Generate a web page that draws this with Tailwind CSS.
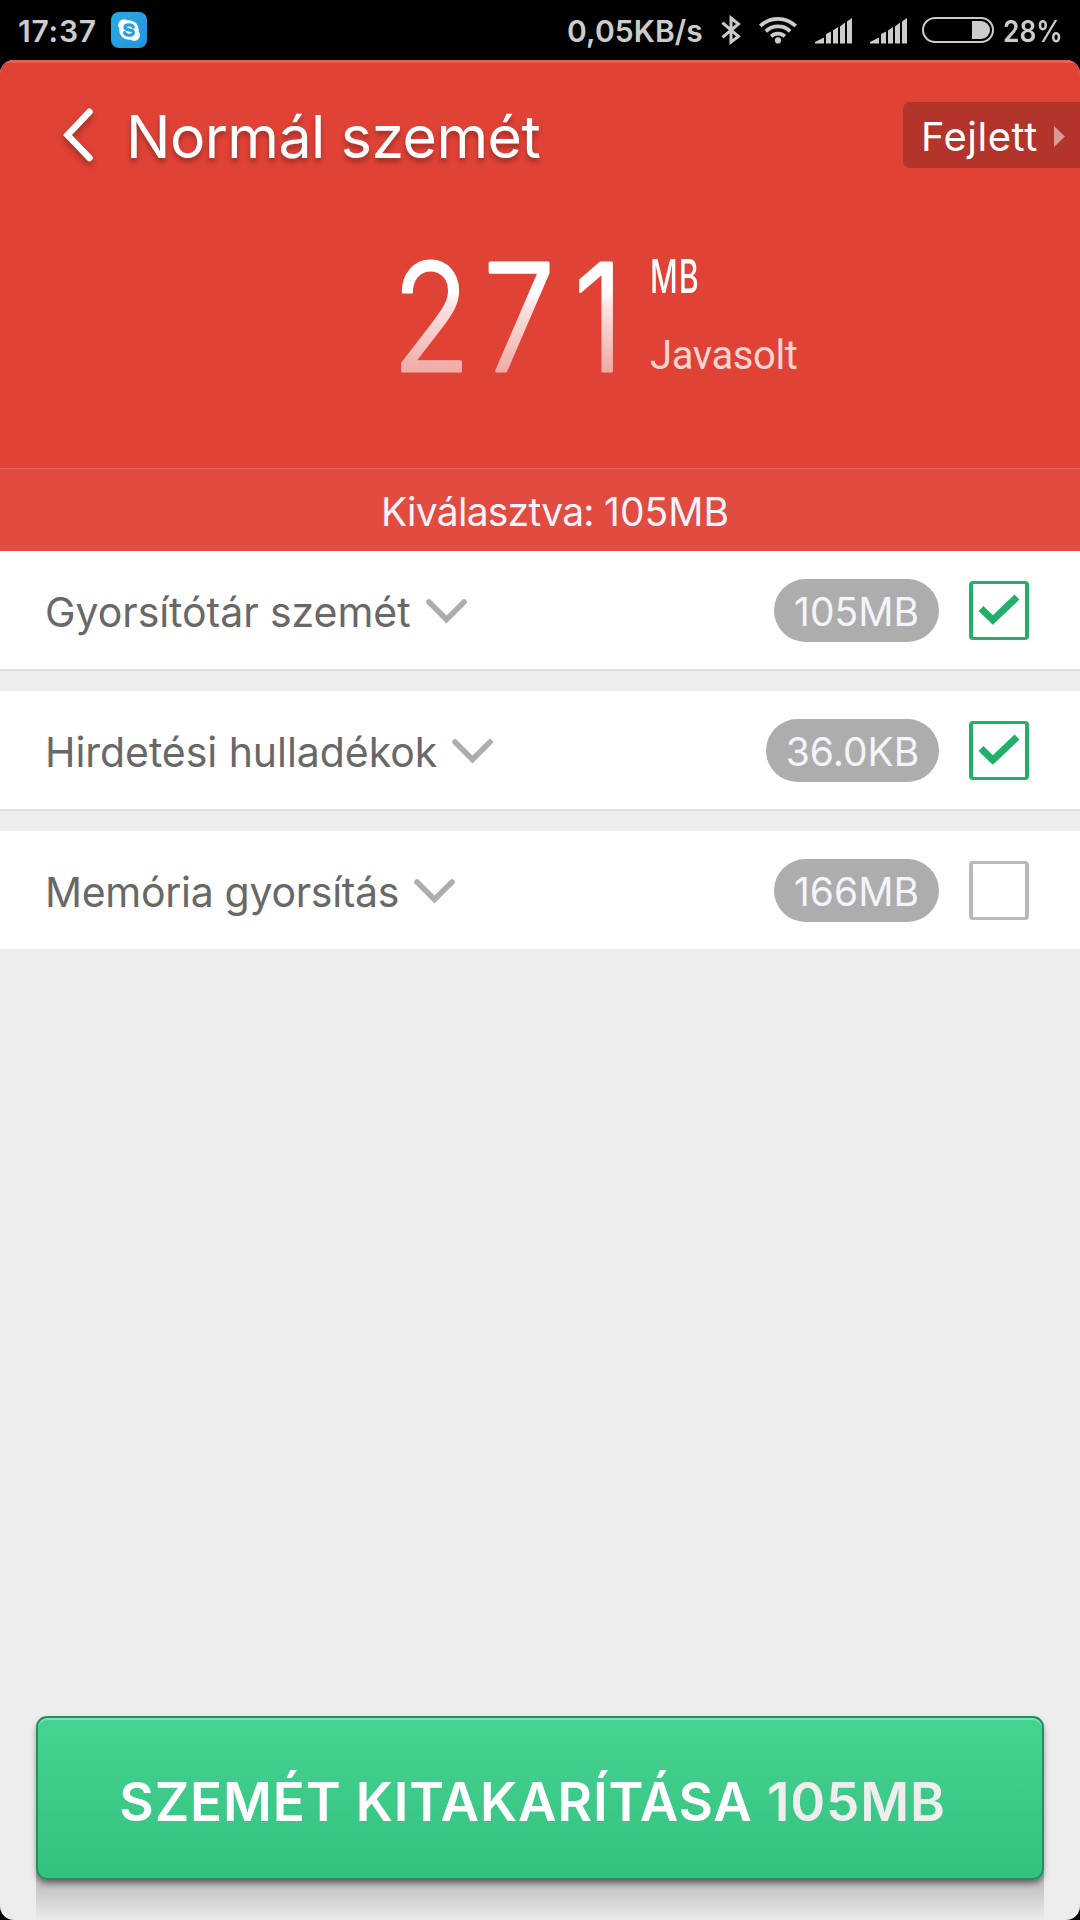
<!DOCTYPE html>
<html lang="hu">
<head>
    <meta charset="UTF-8">
    <meta name="viewport" content="width=device-width, initial-scale=1.0">
    <title>Normál szemét</title>
    <script src="https://cdn.jsdelivr.net/npm/@tailwindcss/browser@4"></script>
</head>
<body class="bg-black w-[1080px] h-[1920px] overflow-hidden font-['Inter','Liberation_Sans',sans-serif]">
    <div class="flex flex-col w-full h-full">

        <!-- status bar -->
        <div class="h-[60px] shrink-0 flex items-center justify-between pl-[18px] pr-[18px] text-[#cccccc] font-semibold text-[30px] leading-[60px]">
            <div class="flex items-center">
                <span class="tracking-[0.8px] pt-[2px] w-[93px]">17:37</span>
                <svg width="36" height="36" viewBox="0 0 36 36">
                    <defs>
                        <linearGradient id="sky" x1="0" y1="0" x2="1" y2="1">
                            <stop offset="0" stop-color="#2aaae2"/>
                            <stop offset="1" stop-color="#2393de"/>
                        </linearGradient>
                    </defs>
                    <rect width="36" height="36" rx="8" fill="url(#sky)"/>
                    <circle cx="18" cy="18" r="9.8" fill="#fff"/>
                    <circle cx="13" cy="13" r="5.8" fill="#fff"/>
                    <circle cx="23.2" cy="23.2" r="5.8" fill="#f1f6fb"/>
                    <path d="M22.2 15.2C21.4 12.2 14 12 14 15.4C14 19 22.4 16.8 22.4 20.6C22.4 24.2 14.4 24 13.6 20.6" fill="none" stroke="#2a9fdf" stroke-width="3.2" stroke-linecap="round"/>
                </svg>
            </div>
            <div class="flex items-center">
                <span class="tracking-[0.1px] pt-[2px] w-[154px]">0,05KB/s</span>
                <svg width="20" height="30" viewBox="0 0 20 30" fill="none" stroke="#cccccc" stroke-width="3" stroke-linejoin="miter">
                    <path d="M1.4 7.6L17.5 21.5L10 27V3L17.5 9L1.4 22.4"/>
                </svg>
                <svg class="ml-[18px]" width="38" height="28" viewBox="0 0 38 28" fill="none" stroke="#cccccc" stroke-width="3.8">
                    <path d="M1.3 10A25.5 25.5 0 0 1 36.7 10"/>
                    <path d="M6.8 15.3A17.6 17.6 0 0 1 31.2 15.3"/>
                    <path d="M12.2 20.3A10 10 0 0 1 25.8 20.3"/>
                    <circle cx="19" cy="24.4" r="3.1" fill="#cccccc" stroke="none"/>
                </svg>
                <svg class="ml-[18px] mt-[2px]" width="37" height="26" viewBox="0 0 37 26" fill="#cccccc">
                    <path d="M0 25.5V24L9 19.5V25.5ZM11 25.5V16L16 13.5V25.5ZM18 25.5V12.5L23 9V25.5ZM25 25.5V8.5L30 4.5V25.5ZM32 25.5V3.5L37 0V25.5Z"/>
                </svg>
                <svg class="ml-[18px] mt-[2px]" width="37" height="26" viewBox="0 0 37 26" fill="#cccccc">
                    <path d="M0 25.5V24L9 19.5V25.5ZM11 25.5V16L16 13.5V25.5ZM18 25.5V12.5L23 9V25.5ZM25 25.5V8.5L30 4.5V25.5ZM32 25.5V3.5L37 0V25.5Z"/>
                </svg>
                <div class="ml-[15px] w-[72px] h-[26px] rounded-full border-2 border-[#cccccc] p-[2px] flex justify-end">
                    <div class="w-[18px] h-full bg-[#cccccc] rounded-r-full"></div>
                </div>
                <span class="ml-[9px] pt-[2px] w-[59px]"><span class="inline-block origin-left scale-x-[0.88]">28%</span></span>
            </div>
        </div>

        <div class="flex-1 flex flex-col bg-[#ededed] rounded-[14px] overflow-hidden">

            <!-- header -->
            <div class="h-[491px] shrink-0 flex flex-col bg-[#e04236] text-white border-t-[3px] border-[#e66257]">
                <div class="h-[144px] flex items-center justify-between pl-[62px]">
                    <div class="flex items-center">
                        <svg class="drop-shadow-[0_4px_3px_rgba(0,0,0,0.3)]" width="32" height="54" viewBox="0 0 32 54" fill="none" stroke="#fff" stroke-width="6.5" stroke-linecap="round" stroke-linejoin="miter">
                            <path d="M27.5 3.8L5.5 27L27.5 50"/>
                        </svg>
                        <h1 class="ml-[32px] pt-[3px] text-[59px] leading-none tracking-[-0.55px] [text-shadow:0_4px_5px_rgba(0,0,0,0.3)]">Normál szemét</h1>
                    </div>
                    <button class="h-[66px] w-[177px] flex items-center bg-[#b2342b] rounded-l-[7px] pl-[18px] pt-[3px] text-[40px] leading-none tracking-[0.5px]">
                        Fejlett
                        <svg class="ml-[16px]" width="11" height="21" viewBox="0 0 11 21" fill="#dc9893">
                            <path d="M0 0L11 10.5L0 21Z"/>
                        </svg>
                    </button>
                </div>

                <div class="h-[261px] pt-[15px] pl-[392px] flex">
                    <svg width="240" height="190" viewBox="0 0 240 190">
                        <defs>
                            <linearGradient id="fade" gradientUnits="userSpaceOnUse" x1="0" y1="39" x2="0" y2="150">
                                <stop offset="0.28" stop-color="#fff"/>
                                <stop offset="0.42" stop-color="#fae2e0"/>
                                <stop offset="1" stop-color="#f1a9a5"/>
                            </linearGradient>
                        </defs>
                        <text transform="scale(0.86 1)" x="0 106 211" y="149" font-size="149" font-weight="300" fill="url(#fade)" stroke="url(#fade)" stroke-width="3" stroke-linejoin="round">271</text>
                    </svg>
                    <div class="ml-[18px] flex flex-col items-start">
                        <span class="mt-[31px] h-[47px] origin-left scale-x-[0.66] text-[46px] leading-[47px] font-medium tracking-[1.5px]">MB</span>
                        <span class="mt-[33px] text-[40px] leading-[46px] tracking-[-0.4px] font-['Roboto',sans-serif] text-[#fad4d1]">Javasolt</span>
                    </div>
                </div>

                <div class="flex-1 flex items-center justify-center bg-[#e24b40] border-t border-[#e5695f] pl-[30px] pt-[2px] text-[39px] leading-none text-[#f7f3fa] whitespace-pre"><span class="tracking-[-0.75px]">Kiválasztva: </span>105MB</div>
            </div>

            <!-- junk categories -->
            <div class="flex flex-col gap-5 text-[#686868] text-[41px] leading-none">
                <div class="h-[120px] flex items-center justify-between bg-white border-b-2 border-[#dcdcdc] pl-[45px] pr-[51px]">
                    <div class="flex items-center pt-[2px]">
                        <span class="pt-[3px] tracking-[-0.05px]">Gyorsítótár szemét</span>
                        <svg class="ml-[15px]" width="41" height="25" viewBox="0 0 41 25" fill="none" stroke="#adadad" stroke-width="5.6" stroke-linecap="round">
                            <path d="M3 3L20.5 20.5L38 3"/>
                        </svg>
                    </div>
                    <div class="flex items-center">
                        <span class="h-[63px] w-[165px] flex items-center justify-center rounded-full bg-[#adadad] pt-[3px] text-[39px] text-[#f4f4fa]">105MB</span>
                        <span class="ml-[30px] w-[60px] h-[59px] rounded-[4px] border-4 border-[#20b069] border-y-[3px] flex items-center justify-center">
                            <svg width="42" height="32" viewBox="0 0 42 32" fill="none" stroke="#20b069" stroke-width="7">
                                <path d="M3 14.5L14.8 26L39 3" stroke-linejoin="miter"/>
                            </svg>
                        </span>
                    </div>
                </div>
                <div class="h-[120px] flex items-center justify-between bg-white border-b-2 border-[#dcdcdc] pl-[45px] pr-[51px]">
                    <div class="flex items-center pt-[2px]">
                        <span class="pt-[3px] tracking-[-0.05px]">Hirdetési hulladékok</span>
                        <svg class="ml-[15px]" width="41" height="25" viewBox="0 0 41 25" fill="none" stroke="#adadad" stroke-width="5.6" stroke-linecap="round">
                            <path d="M3 3L20.5 20.5L38 3"/>
                        </svg>
                    </div>
                    <div class="flex items-center">
                        <span class="h-[63px] w-[173px] flex items-center justify-center rounded-full bg-[#adadad] pt-[3px] text-[39px] text-[#f4f4fa]">36.0KB</span>
                        <span class="ml-[30px] w-[60px] h-[59px] rounded-[4px] border-4 border-[#20b069] border-y-[3px] flex items-center justify-center">
                            <svg width="42" height="32" viewBox="0 0 42 32" fill="none" stroke="#20b069" stroke-width="7">
                                <path d="M3 14.5L14.8 26L39 3" stroke-linejoin="miter"/>
                            </svg>
                        </span>
                    </div>
                </div>
                <div class="h-[118px] flex items-center justify-between bg-white pl-[45px] pr-[51px]">
                    <div class="flex items-center pt-[2px]">
                        <span class="pt-[3px] tracking-[-0.3px]">Memória gyorsítás</span>
                        <svg class="ml-[15px]" width="41" height="25" viewBox="0 0 41 25" fill="none" stroke="#adadad" stroke-width="5.6" stroke-linecap="round">
                            <path d="M3 3L20.5 20.5L38 3"/>
                        </svg>
                    </div>
                    <div class="flex items-center">
                        <span class="h-[63px] w-[165px] flex items-center justify-center rounded-full bg-[#adadad] pt-[3px] text-[39px] text-[#f4f4fa]">166MB</span>
                        <span class="ml-[30px] w-[60px] h-[59px] rounded-[4px] border-4 border-[#b9b9b9] border-y-[3px]"></span>
                    </div>
                </div>
            </div>

            <!-- clean button -->
            <div class="mt-auto px-[36px]">
                <button class="relative w-full h-[164px] flex items-center justify-center rounded-[11px] border-2 border-[#22905c] bg-linear-to-b from-[#46d492] to-[#34c07e] shadow-[inset_0_2px_0_rgba(255,255,255,0.3),0_4px_6px_-1px_rgba(0,0,0,0.5)] pt-[8px] pr-[15px] text-[53px] leading-none font-semibold tracking-[0.85px] text-white whitespace-pre">SZEMÉT KITAKARÍTÁSA <span class="text-[#eeeeee]">105MB</span></button>
                <div class="-mt-2 h-[48px] bg-linear-to-b from-[#b4b4b4] to-[#ebebeb]"></div>
            </div>
        </div>
    </div>
</body>
</html>
